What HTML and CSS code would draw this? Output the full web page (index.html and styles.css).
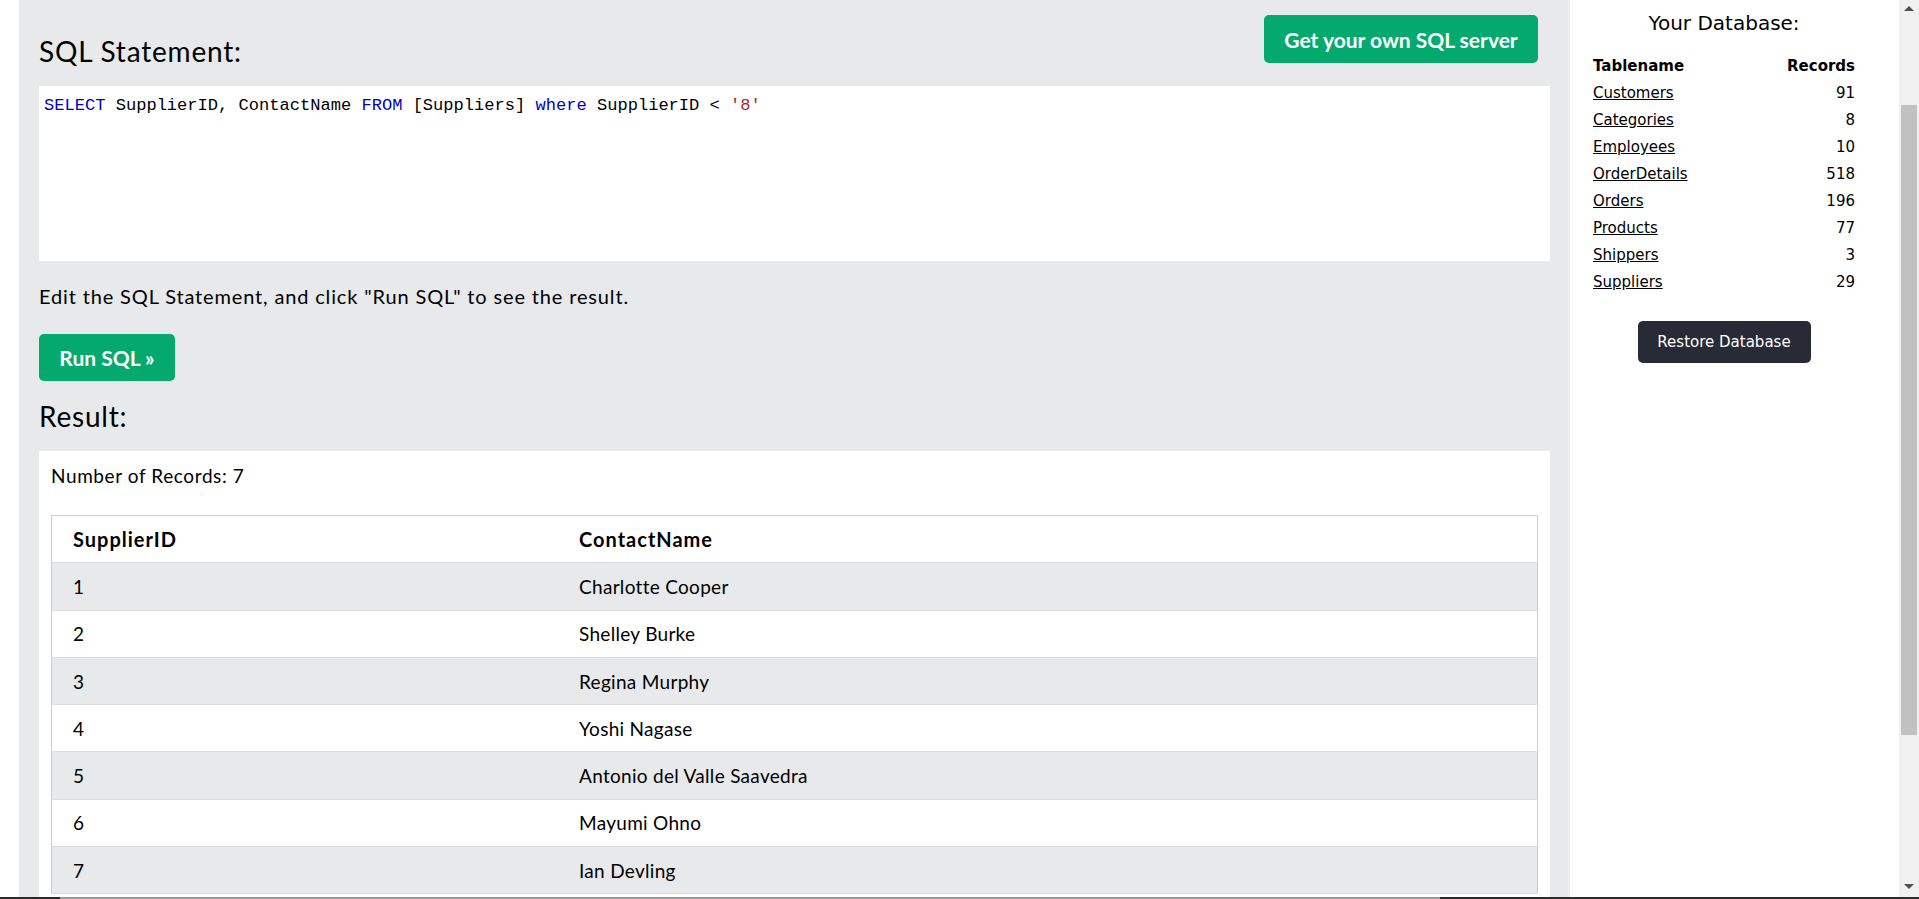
FILE: index.html
```html
<!DOCTYPE html>
<html lang="en">
<head>
<meta charset="utf-8">
<title>SQL Tryit Editor</title>
<link rel="stylesheet" href="styles.css">
</head>
<body>
<div class="page">
  <div class="row">
    <div class="gutter"></div>
    <main class="panel">
      <div class="top">
        <h2 class="title title-top">SQL Statement:</h2>
        <a class="btn btn-server" href="#">Get your own SQL server</a>
      </div>
      <div class="code"><span class="kw">SELECT</span> SupplierID, ContactName <span class="kw">FROM</span> [Suppliers] <span class="kw">where</span> SupplierID &lt; <span class="str">'8'</span></div>
      <p class="hint">Edit the SQL Statement, and click "Run SQL" to see the result.</p>
      <button class="btn btn-run" type="button">Run SQL »</button>
      <h2 class="title title-result">Result:</h2>
      <div class="result">
        <div class="count">Number of Records: 7</div>
        <table class="data">
          <thead>
            <tr><th class="c1">SupplierID</th><th>ContactName</th></tr>
          </thead>
          <tbody>
            <tr><td class="c1">1</td><td>Charlotte Cooper</td></tr>
            <tr><td class="c1">2</td><td>Shelley Burke</td></tr>
            <tr><td class="c1">3</td><td>Regina Murphy</td></tr>
            <tr><td class="c1">4</td><td>Yoshi Nagase</td></tr>
            <tr><td class="c1">5</td><td>Antonio del Valle Saavedra</td></tr>
            <tr><td class="c1">6</td><td>Mayumi Ohno</td></tr>
            <tr><td class="c1">7</td><td>Ian Devling</td></tr>
          </tbody>
        </table>
      </div>
    </main>
    <aside class="side">
      <h3 class="side-title">Your Database:</h3>
      <table class="db">
        <thead>
          <tr><th class="db-name">Tablename</th><th class="db-num">Records</th></tr>
        </thead>
        <tbody>
          <tr><td class="db-name"><a href="#">Customers</a></td><td class="db-num">91</td></tr>
          <tr><td class="db-name"><a href="#">Categories</a></td><td class="db-num">8</td></tr>
          <tr><td class="db-name"><a href="#">Employees</a></td><td class="db-num">10</td></tr>
          <tr><td class="db-name"><a href="#">OrderDetails</a></td><td class="db-num">518</td></tr>
          <tr><td class="db-name"><a href="#">Orders</a></td><td class="db-num">196</td></tr>
          <tr><td class="db-name"><a href="#">Products</a></td><td class="db-num">77</td></tr>
          <tr><td class="db-name"><a href="#">Shippers</a></td><td class="db-num">3</td></tr>
          <tr><td class="db-name"><a href="#">Suppliers</a></td><td class="db-num">29</td></tr>
        </tbody>
      </table>
      <button class="restore" type="button">Restore Database</button>
    </aside>
    <div class="vscroll">
      <div class="arrow arrow-up"></div>
      <div class="thumb"></div>
      <div class="arrow arrow-down"></div>
    </div>
  </div>
  <div class="hbar"><div class="hbar-dark"></div><div class="hbar-light"></div><div class="hbar-rest"></div></div>
</div>
</body>
</html>
```

FILE: styles.css
```css
html, body {
  margin: 0;
  padding: 0;
  height: 100%;
  overflow: hidden;
  background: #fff;
}

body {
  font-family: Lato, "Liberation Sans", sans-serif;
  color: #000;
}

.page {
  height: 899px;
  display: flex;
  flex-direction: column;
}

.row {
  height: 897px;
  display: flex;
}

.gutter {
  width: 19px;
  flex: none;
  background: #fff;
}

.panel {
  width: 1549px;
  flex: none;
  box-sizing: border-box;
  background: #e7e9eb;
  padding: 15px 18px 0 20px;
  overflow: hidden;
}

.top {
  display: flex;
  justify-content: space-between;
  align-items: flex-start;
}

.title {
  margin: 0;
  font-size: 28px;
  line-height: 34px;
  font-weight: 400;
  letter-spacing: 0.8px;
}

.title-top {
  margin-top: 19px;
}

.title-result {
  margin-top: 18px;
}

.btn {
  display: flex;
  align-items: center;
  justify-content: center;
  box-sizing: border-box;
  font-family: Lato, "Liberation Sans", sans-serif;
  font-weight: 700;
  color: #fff;
  background: #04aa6d;
  border: none;
  border-radius: 5px;
  text-decoration: none;
  padding: 0;
}

.btn-server {
  width: 274px;
  height: 48px;
  font-size: 21px;
  margin-right: 12px;
}

.btn-run {
  width: 136px;
  height: 47px;
  font-size: 21px;
  margin-top: 23px;
}

.code {
  margin-top: 18px;
  height: 175px;
  box-sizing: border-box;
  background: #fff;
  padding: 10px 5px;
  font-family: "Liberation Mono", "DejaVu Sans Mono", monospace;
  font-size: 17.07px;
  line-height: 20.4px;
  white-space: pre;
}

.kw {
  color: #0000cd;
}

.str {
  color: #a52a2a;
}

.hint {
  margin: 21px 0 0;
  font-size: 20px;
  line-height: 29px;
  letter-spacing: 0.85px;
}

.result {
  margin-top: 18px;
  background: #fff;
  padding: 10px 12px 0;
  height: 500px;
}

.count {
  font-size: 19px;
  line-height: 29px;
  letter-spacing: 0.6px;
}

.data {
  margin-top: 25px;
  width: 100%;
  border-collapse: collapse;
  border: 1px solid #cccccc;
  font-size: 19px;
  letter-spacing: 0.3px;
}

.data th,
.data td {
  height: 46.3px;
  padding: 0 21px;
  text-align: left;
  vertical-align: middle;
  border-bottom: 1px solid #dddddd;
}

.data th {
  font-weight: 700;
  font-size: 20px;
  letter-spacing: 1px;
}

.data .c1 {
  width: 464px;
}

.data tbody tr:nth-child(odd) {
  background: #e7e9eb;
}

.data tbody tr:nth-child(even) {
  background: #fff;
}

.side {
  width: 331px;
  flex: none;
  box-sizing: border-box;
  border-left: 2px solid #eeeeee;
  background: #fff;
  padding: 11px 21px 0 0;
  font-family: "DejaVu Sans", Verdana, sans-serif;
  font-size: 15px;
  display: flex;
  flex-direction: column;
  align-items: center;
}

.side-title {
  margin: 0;
  font-size: 20px;
  line-height: 24px;
  font-weight: 400;
  text-align: center;
}

.db {
  width: 262px;
  margin-top: 18px;
  border-collapse: collapse;
}

.db th,
.db td {
  padding: 0;
  line-height: 27px;
  height: 27px;
}

.db th {
  font-weight: 700;
}

.db .db-name {
  text-align: left;
}

.db .db-num {
  text-align: right;
}

.db a {
  color: #000;
  text-decoration: underline;
}

.restore {
  margin-top: 25px;
  width: 173px;
  height: 42px;
  background: #282a35;
  color: #fff;
  border: none;
  border-radius: 5px;
  font-family: "DejaVu Sans", Verdana, sans-serif;
  font-size: 15px;
  padding: 0;
}

.vscroll {
  width: 20px;
  flex: none;
  background: #f0f0f0;
  display: flex;
  flex-direction: column;
  align-items: center;
}

.arrow {
  width: 0;
  height: 0;
  border-left: 5px solid transparent;
  border-right: 5px solid transparent;
}

.arrow-up {
  margin-top: 6px;
  border-bottom: 5px solid #505050;
}

.arrow-down {
  margin-top: auto;
  margin-bottom: 8px;
  border-top: 5px solid #505050;
}

.thumb {
  margin-top: 94px;
  width: 16px;
  height: 630px;
  background: #c1c1c1;
}

.hbar {
  height: 2px;
  display: flex;
}

.hbar-dark {
  width: 60px;
  background: #2b2b2b;
}

.hbar-light {
  width: 1380px;
  background: #9a9a9a;
}

.hbar-rest {
  flex: 1;
  background: #2b2b2b;
}
```
